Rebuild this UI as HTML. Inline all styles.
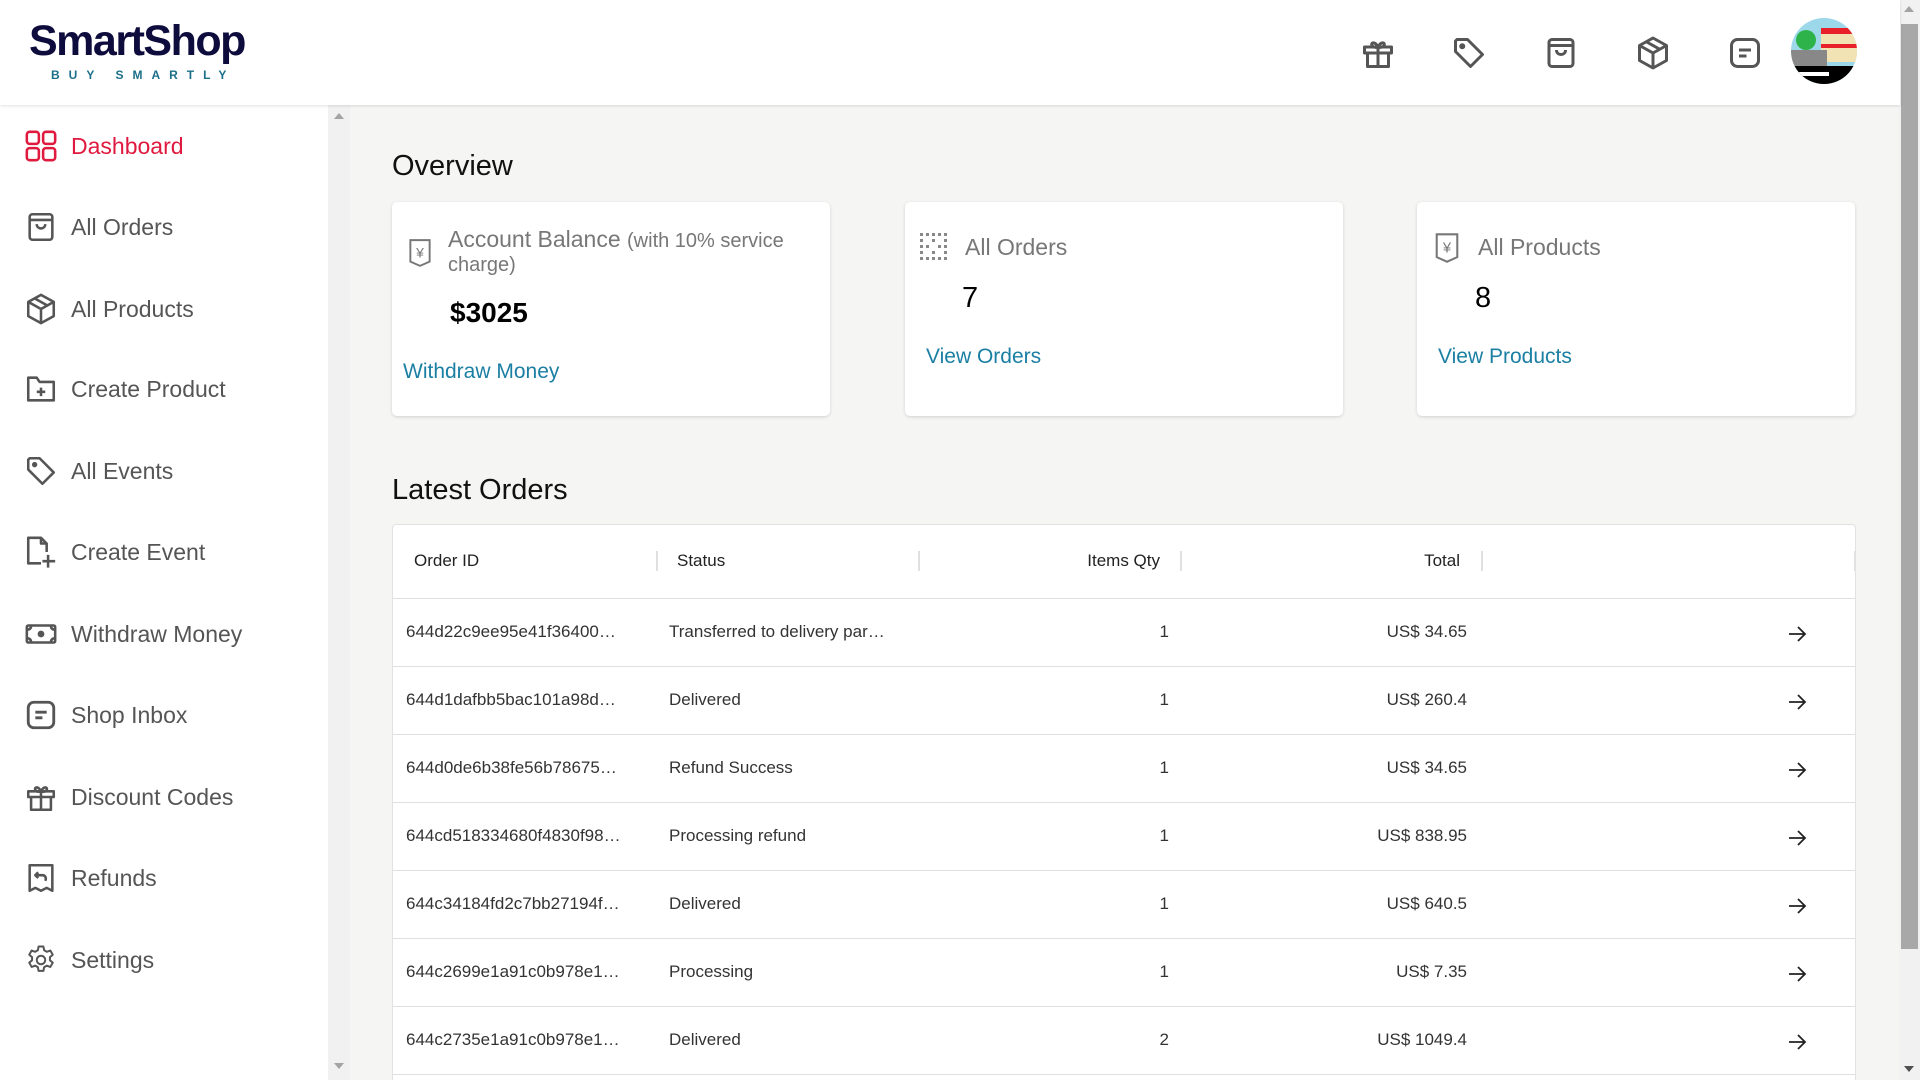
<!DOCTYPE html>
<html><head><meta charset="utf-8"><style>
*{box-sizing:border-box;margin:0;padding:0}
html,body{width:1920px;height:1080px;overflow:hidden}
body{background:#f5f5f4;font-family:"Liberation Sans",sans-serif;position:relative}
.a{position:absolute}
header{position:absolute;left:0;top:0;width:1900px;height:105px;background:#fff;box-shadow:0 1px 3px rgba(0,0,0,.12);z-index:2}
.side{position:absolute;left:0;top:105px;width:328px;height:975px;background:#fff}
.strack{position:absolute;left:328px;top:105px;width:22px;height:975px;background:#f1f1f1}
.item{position:absolute;left:0;height:40px;display:flex;align-items:center;font-size:23px;color:#555}
.item svg{position:absolute;left:24px;width:34px;height:34px}
.item span{position:absolute;left:71px;white-space:nowrap}
.hi{position:absolute;top:35px;width:36px;height:36px}
.card{position:absolute;top:202px;width:438px;height:214px;background:#fff;border-radius:5px;box-shadow:0 1px 3px rgba(0,0,0,.15)}
.ct{position:absolute;font-size:23px;color:#777;white-space:nowrap}
.cn{position:absolute;font-size:29px;color:#000}
.cl{position:absolute;font-size:21px;color:#1b7fa3;white-space:nowrap}
.tbl{position:absolute;left:392px;top:524px;width:1464px;height:556px;background:#fff;border:1px solid #e2e2e2;border-bottom:0;border-radius:4px 4px 0 0;overflow:hidden}
.th{position:absolute;top:26px;font-size:17px;color:#222;white-space:nowrap;font-weight:500}
.sep{position:absolute;top:26px;width:2px;height:20px;background:#e0e0e0}
.row{position:absolute;left:0;width:1462px;height:68px;border-top:1px solid #e0e0e0;font-size:17px;color:#333}
.row div{position:absolute;top:23px;white-space:nowrap}
.row svg{position:absolute;left:1392px;top:23px}
</style></head><body>
<header>
<div class="a" style="left:29px;top:17px;font-size:43px;color:#0d0c3d;letter-spacing:-1.5px;font-weight:bold">SmartShop</div>
<div class="a" style="left:51px;top:68px;font-size:12px;color:#1b6f88;letter-spacing:9px;font-weight:bold">BUY SMARTLY</div>
<svg class="hi" style="left:1360px" viewBox="0 0 24 24" fill="none" stroke="#555" stroke-width="2" stroke-linejoin="round"><rect x="3" y="8" width="18" height="4"/><path d="M5 12v9h14v-9M12 8v13M12 8C10 4 7 5 8 7s4 1 4 1M12 8c2-4 5-3 4-1s-4 1-4 1"/></svg>
<svg class="hi" style="left:1451px" viewBox="0 0 24 24" fill="none" stroke="#555" stroke-width="2" stroke-linejoin="round"><path d="M3 4v7l10 10 8-8L11 3H4z"/><circle cx="7.5" cy="7.5" r="1" fill="#555"/></svg>
<svg class="hi" style="left:1543px" viewBox="0 0 24 24" fill="none" stroke="#555" stroke-width="2" stroke-linejoin="round"><rect x="4" y="3" width="16" height="18" rx="2"/><path d="M4 7h16M9 10c0 4 6 4 6 0"/></svg>
<svg class="hi" style="left:1635px" viewBox="0 0 24 24" fill="none" stroke="#555" stroke-width="2" stroke-linejoin="round"><path d="M12 2l9 5v10l-9 5-9-5V7zM3 7l9 5 9-5M12 12v10M7.5 4.5l9 5"/></svg>
<svg class="hi" style="left:1727px" viewBox="0 0 24 24" fill="none" stroke="#555" stroke-width="2"><rect x="3" y="3" width="18" height="18" rx="4"/><path d="M8 10h8M8 14h5"/></svg>
<svg class="a" style="left:1791px;top:18px" width="66" height="66" viewBox="0 0 66 66"><defs><clipPath id="c"><circle cx="33" cy="33" r="33"/></clipPath></defs><g clip-path="url(#c)"><rect width="66" height="66" fill="#9dd8ea"/><rect x="30" y="14" width="36" height="30" fill="#f1e3b3"/><rect x="30" y="10" width="36" height="6" fill="#e8202a"/><rect x="30" y="26" width="36" height="4" fill="#e8202a"/><rect x="0" y="32" width="36" height="16" fill="#888"/><circle cx="15" cy="22" r="10" fill="#2db34a"/><rect x="0" y="48" width="66" height="18" fill="#000"/><rect x="8" y="54" width="30" height="4" fill="#fff"/></g></svg>
</header>
<div class="a" style="left:1899px;top:0;width:21px;height:1080px;background:#f1f1f1"></div>
<div class="a" style="left:1901px;top:24px;width:17px;height:925px;background:#a8a8a8"></div>
<div class="a" style="left:1904px;top:6px;border:5px solid transparent;border-bottom:6px solid #a3a3a3;border-top:0"></div>
<div class="a" style="left:1904px;top:1066px;border:5px solid transparent;border-top:6px solid #505050;border-bottom:0"></div>
<div class="side"></div>
<div class="strack"></div>
<div class="a" style="left:334px;top:113px;border:5px solid transparent;border-bottom:6px solid #a3a3a3;border-top:0"></div>
<div class="a" style="left:334px;top:1063px;border:5px solid transparent;border-top:6px solid #a3a3a3;border-bottom:0"></div>

<div class="item" style="top:126px;color:#e0193f"><svg viewBox="0 0 24 24" fill="none" stroke="#e0193f" stroke-width="1.8"><rect x="2" y="2" width="8.5" height="8.5" rx="2"/><rect x="13.5" y="2" width="8.5" height="8.5" rx="2"/><rect x="2" y="13.5" width="8.5" height="8.5" rx="2"/><rect x="13.5" y="13.5" width="8.5" height="8.5" rx="2"/></svg><span>Dashboard</span></div>
<div class="item" style="top:207px"><svg viewBox="0 0 24 24" fill="none" stroke="#555" stroke-width="1.8" stroke-linejoin="round"><rect x="4" y="3" width="16" height="18" rx="2"/><path d="M4 7h16M9 10c0 4 6 4 6 0"/></svg><span>All Orders</span></div>
<div class="item" style="top:289px"><svg viewBox="0 0 24 24" fill="none" stroke="#555" stroke-width="1.8" stroke-linejoin="round"><path d="M12 2l9 5v10l-9 5-9-5V7zM3 7l9 5 9-5M12 12v10M7.5 4.5l9 5"/></svg><span>All Products</span></div>
<div class="item" style="top:369px"><svg viewBox="0 0 24 24" fill="none" stroke="#555" stroke-width="1.8" stroke-linejoin="round"><path d="M3 4h6l2 3h10v13H3zM12 11v6M9 14h6"/></svg><span>Create Product</span></div>
<div class="item" style="top:451px"><svg viewBox="0 0 24 24" fill="none" stroke="#555" stroke-width="1.8" stroke-linejoin="round"><path d="M3 4v7l10 10 8-8L11 3H4z"/><circle cx="7.5" cy="7.5" r="1" fill="#555"/></svg><span>All Events</span></div>
<div class="item" style="top:532px"><svg viewBox="0 0 24 24" fill="none" stroke="#555" stroke-width="1.8" stroke-linejoin="round"><path d="M12 20H3V2h9l4 4v6M12 2v4h4M17 14v9M13 18.5h9"/></svg><span>Create Event</span></div>
<div class="item" style="top:614px"><svg viewBox="0 0 24 24" fill="none" stroke="#555" stroke-width="1.8" stroke-linejoin="round"><rect x="2" y="6" width="20" height="12" rx="1"/><circle cx="12" cy="12" r="1.5" fill="#555"/><path d="M2 9c2 0 3-1 3-3M22 9c-2 0-3-1-3-3M2 15c2 0 3 1 3 3M22 15c-2 0-3 1-3 3"/></svg><span>Withdraw Money</span></div>
<div class="item" style="top:695px"><svg viewBox="0 0 24 24" fill="none" stroke="#555" stroke-width="2"><rect x="3" y="3" width="18" height="18" rx="4"/><path d="M8 10h8M8 14h5"/></svg><span>Shop Inbox</span></div>
<div class="item" style="top:777px"><svg viewBox="0 0 24 24" fill="none" stroke="#555" stroke-width="1.8" stroke-linejoin="round"><rect x="3" y="8" width="18" height="4"/><path d="M5 12v9h14v-9M12 8v13M12 8C10 4 7 5 8 7s4 1 4 1M12 8c2-4 5-3 4-1s-4 1-4 1"/></svg><span>Discount Codes</span></div>
<div class="item" style="top:858px"><svg viewBox="0 0 24 24" fill="none" stroke="#555" stroke-width="1.8" stroke-linejoin="round"><path d="M4 3h16v18l-4-2-4 2-4-2-4 2zM10 8l-2 2 2 2M8 10h5c2 0 3 2 2 4"/></svg><span>Refunds</span></div>
<div class="item" style="top:940px"><svg viewBox="0 0 24 24" fill="none" stroke="#555" stroke-width="1.4" stroke-linejoin="round"><circle cx="12" cy="12" r="3"/><path d="M10.3 2.5h3.4l.5 2.6 1.9 1.1 2.5-.9 1.7 3-2 1.7v2.2l2 1.7-1.7 3-2.5-.9-1.9 1.1-.5 2.6h-3.4l-.5-2.6-1.9-1.1-2.5.9-1.7-3 2-1.7V10L3.7 8.3l1.7-3 2.5.9 1.9-1.1z"/></svg><span>Settings</span></div>

<div class="a" style="left:392px;top:150px;font-size:29px;color:#111">Overview</div>
<div class="card" style="left:392px">
<svg class="a" style="left:15px;top:36px" width="26" height="30" viewBox="0 0 24 28" fill="none" stroke="#777" stroke-width="1.8"><path d="M3 2h18v20l-9 4-9-4z"/><text x="12" y="18" font-size="13" text-anchor="middle" fill="#777" stroke="none" font-family="Liberation Sans">¥</text></svg>
<div class="ct" style="left:56px;top:24px">Account Balance <span style="font-size:20px">(with 10% service</span></div>
<div class="ct" style="left:56px;top:52px;font-size:20px">charge)</div>
<div class="cn" style="left:58px;top:95px;font-weight:bold;font-size:28px">$3025</div>
<div class="cl" style="left:11px;top:158px">Withdraw Money</div>
</div>
<div class="card" style="left:905px">
<svg class="a" style="left:14px;top:30px" width="30" height="30" viewBox="0 0 30 30" fill="#888"><rect x="1" y="1" width="3" height="3"/><rect x="7" y="1" width="3" height="3"/><rect x="13" y="1" width="3" height="3"/><rect x="19" y="1" width="3" height="3"/><rect x="25" y="1" width="3" height="3"/><rect x="1" y="7" width="3" height="3"/><rect x="25" y="7" width="3" height="3"/><rect x="13" y="7" width="3" height="3"/><rect x="1" y="13" width="3" height="3"/><rect x="7" y="13" width="3" height="3"/><rect x="19" y="13" width="3" height="3"/><rect x="25" y="13" width="3" height="3"/><rect x="1" y="19" width="3" height="3"/><rect x="13" y="19" width="3" height="3"/><rect x="25" y="19" width="3" height="3"/><rect x="1" y="25" width="3" height="3"/><rect x="7" y="25" width="3" height="3"/><rect x="13" y="25" width="3" height="3"/><rect x="19" y="25" width="3" height="3"/><rect x="25" y="25" width="3" height="3"/></svg>
<div class="ct" style="left:60px;top:32px">All Orders</div>
<div class="cn" style="left:57px;top:80px">7</div>
<div class="cl" style="left:21px;top:143px">View Orders</div>
</div>
<div class="card" style="left:1417px">
<svg class="a" style="left:15px;top:30px" width="30" height="32" viewBox="0 0 24 28" fill="none" stroke="#777" stroke-width="1.8"><path d="M3 2h18v20l-9 4-9-4z"/><text x="12" y="18" font-size="13" text-anchor="middle" fill="#777" stroke="none" font-family="Liberation Sans">¥</text></svg>
<div class="ct" style="left:61px;top:32px">All Products</div>
<div class="cn" style="left:58px;top:80px">8</div>
<div class="cl" style="left:21px;top:143px">View Products</div>
</div>

<div class="a" style="left:392px;top:474px;font-size:29px;color:#111">Latest Orders</div>
<div class="tbl">
<div class="th" style="left:21px">Order ID</div><div class="sep" style="left:263px"></div>
<div class="th" style="left:284px">Status</div><div class="sep" style="left:525px"></div>
<div class="th" style="right:695px">Items Qty</div><div class="sep" style="left:787px"></div>
<div class="th" style="right:395px">Total</div><div class="sep" style="left:1088px"></div>
<div class="sep" style="left:1461px"></div>
<div class="row" style="top:73px"><div style="left:13px">644d22c9ee95e41f36400…</div><div style="left:276px">Transferred to delivery par…</div><div style="right:686px">1</div><div style="right:388px">US$ 34.65</div><svg width="24" height="24" viewBox="0 0 24 24" fill="none" stroke="#222" stroke-width="1.8"><path d="M4 12h16M13 5l7 7-7 7"/></svg></div>
<div class="row" style="top:141px"><div style="left:13px">644d1dafbb5bac101a98d…</div><div style="left:276px">Delivered</div><div style="right:686px">1</div><div style="right:388px">US$ 260.4</div><svg width="24" height="24" viewBox="0 0 24 24" fill="none" stroke="#222" stroke-width="1.8"><path d="M4 12h16M13 5l7 7-7 7"/></svg></div>
<div class="row" style="top:209px"><div style="left:13px">644d0de6b38fe56b78675…</div><div style="left:276px">Refund Success</div><div style="right:686px">1</div><div style="right:388px">US$ 34.65</div><svg width="24" height="24" viewBox="0 0 24 24" fill="none" stroke="#222" stroke-width="1.8"><path d="M4 12h16M13 5l7 7-7 7"/></svg></div>
<div class="row" style="top:277px"><div style="left:13px">644cd518334680f4830f98…</div><div style="left:276px">Processing refund</div><div style="right:686px">1</div><div style="right:388px">US$ 838.95</div><svg width="24" height="24" viewBox="0 0 24 24" fill="none" stroke="#222" stroke-width="1.8"><path d="M4 12h16M13 5l7 7-7 7"/></svg></div>
<div class="row" style="top:345px"><div style="left:13px">644c34184fd2c7bb27194f…</div><div style="left:276px">Delivered</div><div style="right:686px">1</div><div style="right:388px">US$ 640.5</div><svg width="24" height="24" viewBox="0 0 24 24" fill="none" stroke="#222" stroke-width="1.8"><path d="M4 12h16M13 5l7 7-7 7"/></svg></div>
<div class="row" style="top:413px"><div style="left:13px">644c2699e1a91c0b978e1…</div><div style="left:276px">Processing</div><div style="right:686px">1</div><div style="right:388px">US$ 7.35</div><svg width="24" height="24" viewBox="0 0 24 24" fill="none" stroke="#222" stroke-width="1.8"><path d="M4 12h16M13 5l7 7-7 7"/></svg></div>
<div class="row" style="top:481px"><div style="left:13px">644c2735e1a91c0b978e1…</div><div style="left:276px">Delivered</div><div style="right:686px">2</div><div style="right:388px">US$ 1049.4</div><svg width="24" height="24" viewBox="0 0 24 24" fill="none" stroke="#222" stroke-width="1.8"><path d="M4 12h16M13 5l7 7-7 7"/></svg></div>
<div class="row" style="top:549px;height:6px"></div>
</div>
</body></html>
